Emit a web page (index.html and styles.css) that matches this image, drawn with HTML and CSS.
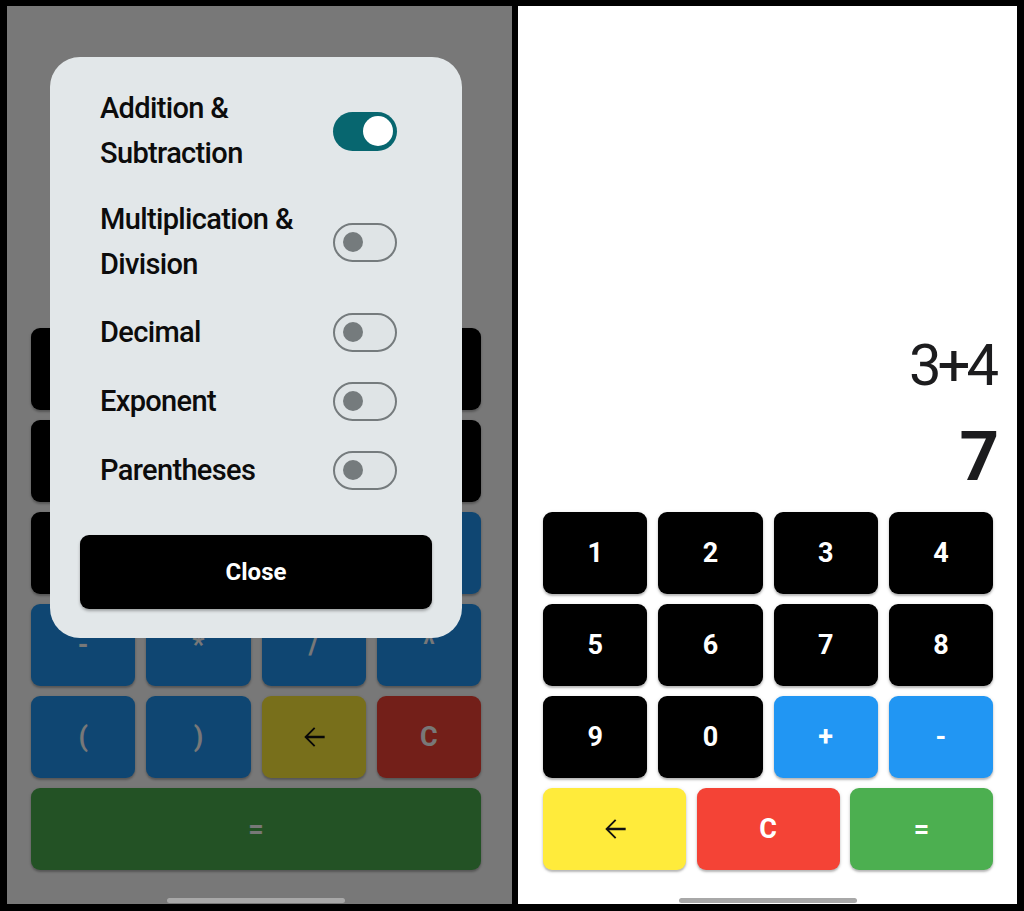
FILE: index.html
```html
<!DOCTYPE html>
<html lang="en">
<head>
<meta charset="utf-8">
<title>Calculator</title>
<link rel="stylesheet" href="styles.css">
</head>
<body>
<div class="stage">
  <section class="screen screen-left">
    <div class="app">
      <div class="display"></div>
      <div class="keypad">
        <div class="row row-4">
          <button class="key key-black"></button>
          <button class="key key-black"></button>
          <button class="key key-black"></button>
          <button class="key key-black"></button>
        </div>
        <div class="row row-4">
          <button class="key key-black"></button>
          <button class="key key-black"></button>
          <button class="key key-black"></button>
          <button class="key key-black"></button>
        </div>
        <div class="row row-4">
          <button class="key key-black"></button>
          <button class="key key-black"></button>
          <button class="key key-black"></button>
          <button class="key key-blue"></button>
        </div>
        <div class="row row-4">
          <button class="key key-blue">-</button>
          <button class="key key-blue">*</button>
          <button class="key key-blue">/</button>
          <button class="key key-blue">^</button>
        </div>
        <div class="row row-4">
          <button class="key key-blue">(</button>
          <button class="key key-blue">)</button>
          <button class="key key-yellow"><svg class="arrow" viewBox="0 0 24 24"><path d="M20 11.1H7.6l5.4-5.4-1-1L4.7 12l7.3 7.3 1-1-5.4-5.4H20z"/></svg></button>
          <button class="key key-red">C</button>
        </div>
        <div class="row row-1">
          <button class="key key-green">=</button>
        </div>
      </div>
    </div>
    <div class="scrim"></div>
    <div class="dialog">
      <div class="options">
        <div class="option">
          <span class="option-label">Addition &amp; Subtraction</span>
          <span class="switch switch-on"><span class="knob"></span></span>
        </div>
        <div class="option">
          <span class="option-label">Multiplication &amp; Division</span>
          <span class="switch switch-off"><span class="knob"></span></span>
        </div>
        <div class="option">
          <span class="option-label">Decimal</span>
          <span class="switch switch-off"><span class="knob"></span></span>
        </div>
        <div class="option">
          <span class="option-label">Exponent</span>
          <span class="switch switch-off"><span class="knob"></span></span>
        </div>
        <div class="option">
          <span class="option-label">Parentheses</span>
          <span class="switch switch-off"><span class="knob"></span></span>
        </div>
      </div>
      <button class="close-btn">Close</button>
    </div>
    <div class="navbar"><span class="handle"></span></div>
  </section>

  <section class="screen screen-right">
    <div class="app">
      <div class="display">
        <div class="expr">3+4</div>
        <div class="result">7</div>
      </div>
      <div class="keypad">
        <div class="row row-4">
          <button class="key key-black">1</button>
          <button class="key key-black">2</button>
          <button class="key key-black">3</button>
          <button class="key key-black">4</button>
        </div>
        <div class="row row-4">
          <button class="key key-black">5</button>
          <button class="key key-black">6</button>
          <button class="key key-black">7</button>
          <button class="key key-black">8</button>
        </div>
        <div class="row row-4">
          <button class="key key-black">9</button>
          <button class="key key-black">0</button>
          <button class="key key-blue">+</button>
          <button class="key key-blue">-</button>
        </div>
        <div class="row row-3">
          <button class="key key-yellow"><svg class="arrow" viewBox="0 0 24 24"><path d="M20 11.1H7.6l5.4-5.4-1-1L4.7 12l7.3 7.3 1-1-5.4-5.4H20z"/></svg></button>
          <button class="key key-red">C</button>
          <button class="key key-green">=</button>
        </div>
      </div>
    </div>
    <div class="navbar"><span class="handle"></span></div>
  </section>
</div>
</body>
</html>
```

FILE: styles.css
```css
* { box-sizing: border-box; }

html, body {
  margin: 0;
  padding: 0;
  background: #000;
  width: 1024px;
  height: 911px;
  overflow: hidden;
  font-family: Roboto, "Noto Sans", "Liberation Sans", sans-serif;
}

.stage {
  display: flex;
  gap: 6px;
  padding: 6px 0 0 7px;
}

.screen {
  position: relative;
  height: 898px;
  background: #fff;
  display: flex;
  flex-direction: column;
}

.screen-left {
  width: 505px;
  padding: 0 31px 0 24px;
}

.screen-right {
  width: 499px;
  padding: 0 24px 0 25px;
}

.app {
  flex: 1;
  display: flex;
  flex-direction: column;
}

.display {
  flex: 1;
  display: flex;
  flex-direction: column;
  justify-content: flex-end;
  align-items: flex-end;
  margin-right: -24px;
  padding-right: 18px;
  color: #1c1c1e;
}

.expr {
  font-size: 58px;
  font-weight: 400;
  line-height: 70px;
  letter-spacing: -4px;
  margin-right: 4px;
  margin-bottom: 17px;
}

.result {
  font-size: 69px;
  font-weight: 700;
  line-height: 80px;
  margin-bottom: 15px;
}

.keypad {
  display: flex;
  flex-direction: column;
  gap: 10px;
}

.row {
  display: grid;
  height: 82px;
}

.row-4 { grid-template-columns: repeat(4, 1fr); column-gap: 11px; }
.row-3 { grid-template-columns: repeat(3, 1fr); column-gap: 10.5px; }
.row-1 { grid-template-columns: 1fr; }

.key {
  border: none;
  border-radius: 9px;
  font-family: Roboto, "Noto Sans", sans-serif;
  font-size: 27px;
  font-weight: 700;
  color: #fff;
  display: flex;
  align-items: center;
  justify-content: center;
  padding: 0;
  box-shadow: 0 2px 2px rgba(0,0,0,0.22), 0 1px 4px rgba(0,0,0,0.12);
}

.key-black { background: #000; }
.key-blue { background: #2196f3; }
.key-yellow { background: #ffeb3b; }
.key-red { background: #f44336; }
.key-green { background: #4caf50; }

.arrow {
  width: 32px;
  height: 32px;
  fill: #111;
}

.navbar {
  position: relative;
  z-index: 3;
  height: 34px;
  display: flex;
  align-items: flex-end;
  justify-content: center;
  padding-bottom: 1px;
}

.handle {
  display: block;
  width: 178px;
  height: 5px;
  border-radius: 3px;
  background: #a8a8a8;
}

.scrim {
  position: absolute;
  inset: 0;
  z-index: 1;
  background: rgba(0,0,0,0.53);
}

.dialog {
  position: absolute;
  z-index: 2;
  left: 43px;
  top: 51px;
  width: 412px;
  height: 581px;
  background: #e2e7e9;
  border-radius: 30px;
  padding: 29px 30px 29px 30px;
  display: flex;
  flex-direction: column;
}

.options {
  display: flex;
  flex-direction: column;
  gap: 21px;
  padding: 0 35px 0 20px;
}

.option {
  display: flex;
  align-items: center;
  min-height: 48px;
}

.option-label {
  flex: 1;
  padding-right: 24px;
  font-size: 29px;
  font-weight: 500;
  line-height: 45px;
  letter-spacing: -0.65px;
  color: #0c0c0c;
}

.switch {
  flex: none;
  width: 64px;
  height: 39px;
  border-radius: 20px;
  display: flex;
  align-items: center;
}

.switch-on {
  background: #07666f;
}

.switch-on .knob {
  width: 30px;
  height: 30px;
  border-radius: 50%;
  background: #fff;
  margin-left: auto;
  margin-right: 4.5px;
}

.switch-off {
  background: #dfe4e6;
  border: 2.5px solid #757b7d;
}

.switch-off .knob {
  width: 20px;
  height: 20px;
  border-radius: 50%;
  background: #757b7d;
  margin-left: 7.5px;
}

.close-btn {
  margin-top: 41px;
  height: 74px;
  width: 100%;
  border: none;
  border-radius: 9px;
  background: #000;
  color: #fff;
  font-family: Roboto, "Noto Sans", sans-serif;
  font-size: 24px;
  font-weight: 700;
  box-shadow: 0 2px 3px rgba(0,0,0,0.3);
}
```
